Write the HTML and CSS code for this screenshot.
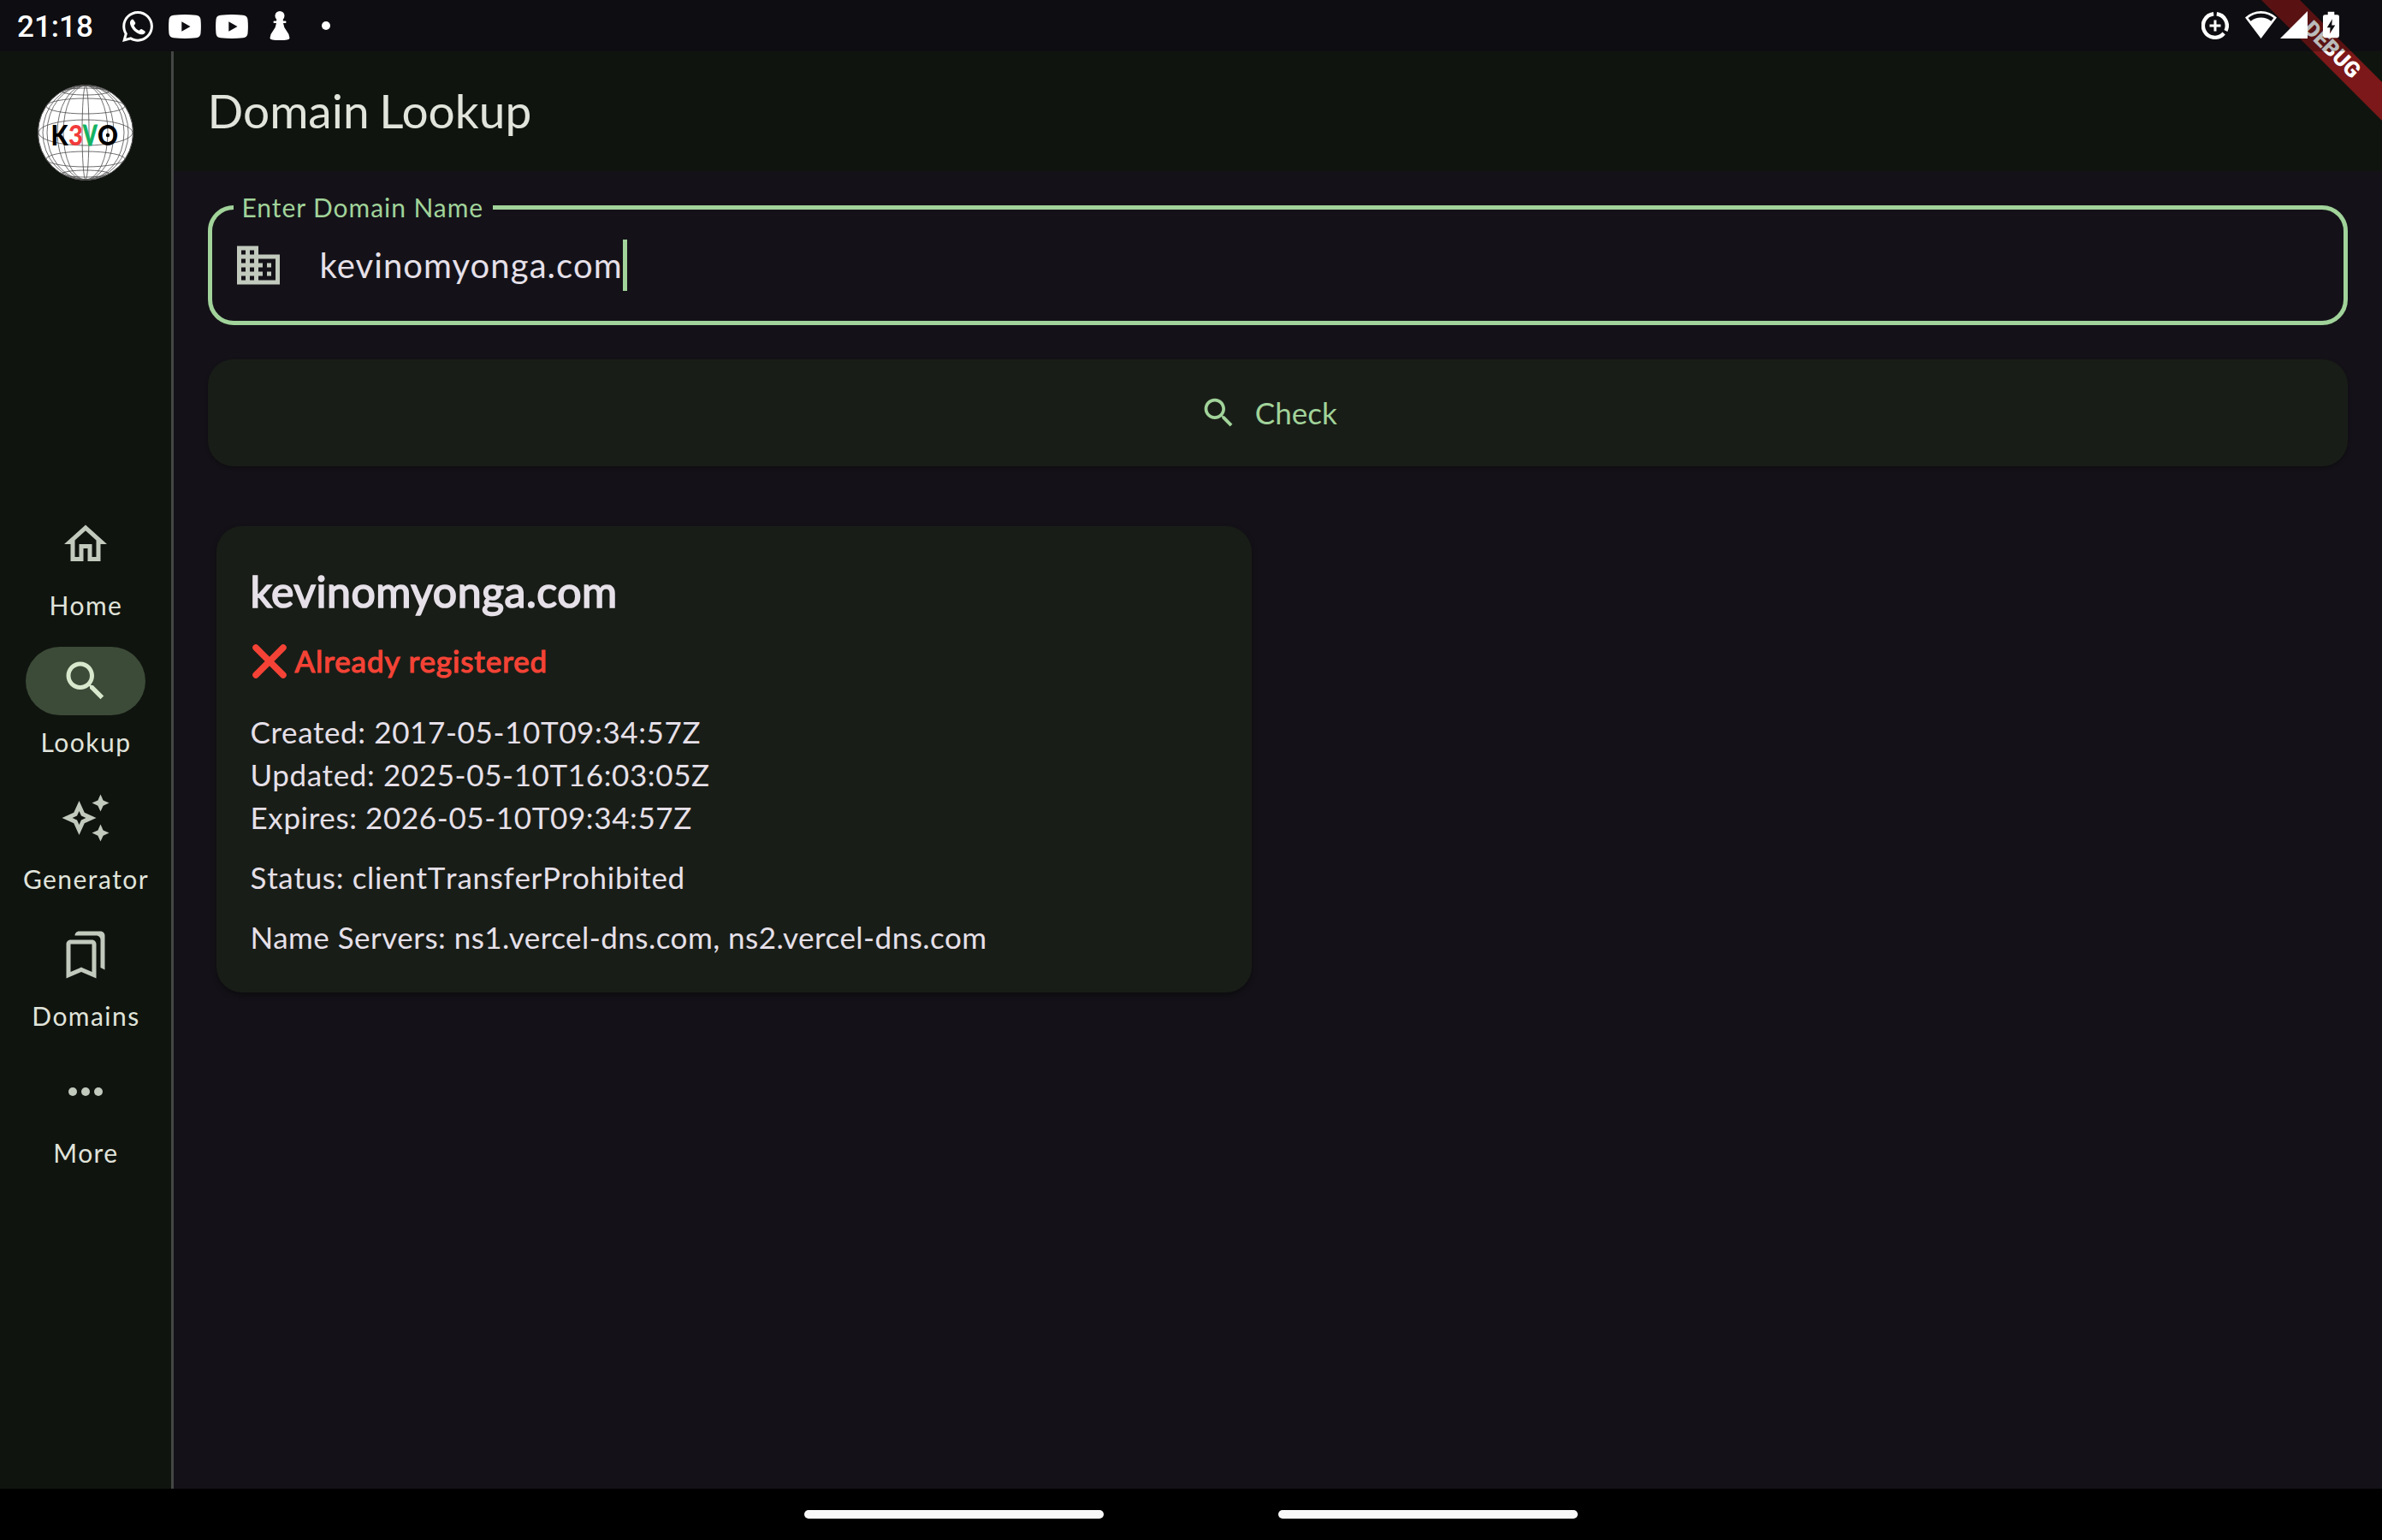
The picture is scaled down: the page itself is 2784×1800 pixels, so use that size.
FILE: index.html
```html
<!DOCTYPE html>
<html lang="en">
<head>
<meta charset="utf-8">
<title>Domain Lookup</title>
<link rel="stylesheet" href="styles.css">
</head>
<body>
<div class="screen">
  <header class="status-bar">
    <div class="status-left">
      <span class="clock">21:18</span>
      <svg class="whatsapp" viewBox="0 0 24 24"><path d="M.057 24l1.687-6.163c-1.041-1.804-1.588-3.849-1.587-5.946.003-6.556 5.338-11.891 11.893-11.891 3.181.001 6.167 1.24 8.413 3.488 2.245 2.248 3.481 5.236 3.48 8.414-.003 6.557-5.338 11.892-11.893 11.892-1.99-.001-3.951-.5-5.688-1.448l-6.305 1.654zm6.597-3.807c1.676.995 3.276 1.591 5.392 1.592 5.448 0 9.886-4.434 9.889-9.885.002-5.462-4.415-9.89-9.881-9.892-5.452 0-9.887 4.434-9.889 9.884-.001 2.225.651 3.891 1.746 5.634l-.999 3.648 3.742-.981z"/><path d="M7.1 6.7c.5-.5 1.2-.5 1.6.1l1.3 2.1c.3.5.2 1-.2 1.4l-.8.8c.9 1.9 2.2 3.2 4.1 4.1l.8-.8c.4-.4.9-.5 1.4-.2l2.1 1.3c.6.4.6 1.1.1 1.6-1 1.1-2.3 1.4-3.8.9-3.5-1.2-6.3-4-7.5-7.5-.5-1.5-.2-2.8.9-3.8z"/></svg>
      <svg class="youtube" viewBox="0 0 38 28"><path fill-rule="evenodd" d="M6 .7Q19-.5 32 .7q5 .5 5.5 5 .8 8.3 0 16.600-.5 4.500-5.500 5-13 1.200-26 0-5-.5-5.500-5-.8-8.300 0-16.600Q1 1.200 6 .7zM15.300 8.300v11.400L25.500 14z"/></svg>
      <svg class="youtube" viewBox="0 0 38 28"><path fill-rule="evenodd" d="M6 .7Q19-.5 32 .7q5 .5 5.500 5 .8 8.300 0 16.600-.5 4.500-5.500 5-13 1.200-26 0-5-.5-5.500-5-.8-8.300 0-16.600Q1 1.200 6 .7zM15.300 8.300v11.400L25.500 14z"/></svg>
      <svg class="pawn" viewBox="0 0 24 34"><circle cx="12" cy="5.500" r="5.500"/><path d="M8.500 9h7l.5 2.500h2.500q1 0 1 1.200t-1 1.200H16q.5 5 4.200 9.500 3.200 3.600 3.300 8 0 2.600-11.500 2.600T.5 31.400q.1-4.400 3.300-8Q7.500 19 8 13.900H5.500q-1 0-1-1.200t1-1.200H8z"/></svg>
      <span class="more-dot"></span>
    </div>
    <div class="status-right">
      <svg class="saver" viewBox="0 0 32 32"><g fill="none" stroke="#fff"><path stroke-width="4.400" d="M17.800 2.300A13.800 13.800 0 0 1 28.400 22M26.200 25A13.800 13.800 0 1 1 14.200 2.300"/><path stroke-width="3" d="M16 9.500v13M9.500 16h13"/></g></svg>
      <svg class="wifi" viewBox="0 0 37 32"><path fill-rule="evenodd" d="M18.500 0Q29 0 37 7.500L18.500 32 0 7.500Q8 0 18.500 0zM3.600 8l3 3.800Q12 7.600 18.500 7.600T30.400 11.800l3-3.800Q27 2.700 18.500 2.700T3.600 8z"/></svg>
      <svg class="signal" viewBox="0 0 32 32"><path d="M32 0v32H0z"/></svg>
      <svg class="battery" viewBox="0 0 20 32"><path fill-rule="evenodd" d="M6 0h8v3.500h3.500Q20 3.500 20 6v23.500q0 2.500-2.500 2.500h-15Q0 32 0 29.500V6q0-2.500 2.500-2.500H6zM11.500 9L5 19.500h4L8.300 27 15 16.500h-4.200z"/></svg>
    </div>
  </header>

  <svg class="debug-banner" viewBox="0 0 150 150">
    <path d="M9 0h45l96 96v45z"/>
    <text transform="translate(92 57.500) rotate(45)" text-anchor="middle" y="9">DEBUG</text>
  </svg>

  <div class="app">
    <nav class="rail">
      <svg class="logo" viewBox="0 0 112 112">
        <circle class="globe" cx="56" cy="56" r="55.500"/>
        <g class="grid">
          <ellipse cx="56" cy="56" rx="4" ry="55"/><ellipse cx="56" cy="56" rx="26" ry="55"/>
          <ellipse cx="56" cy="56" rx="33" ry="55"/><ellipse cx="56" cy="56" rx="45" ry="55"/>
          <ellipse cx="56" cy="56" rx="50" ry="55"/>
          <ellipse cx="56" cy="56" rx="55" ry="15"/><ellipse cx="56" cy="25" rx="46" ry="9"/>
          <ellipse cx="56" cy="87" rx="46" ry="9"/><ellipse cx="56" cy="8" rx="27" ry="4"/>
          <ellipse cx="56" cy="104" rx="27" ry="4"/>
        </g>
        <g class="wordmark">
          <text x="15.500" y="71" textLength="20" lengthAdjust="spacingAndGlyphs">K</text>
          <text class="red" x="36" y="71" textLength="17" lengthAdjust="spacingAndGlyphs">3</text>
          <text class="green" x="53" y="71" textLength="16.500" lengthAdjust="spacingAndGlyphs">V</text>
          <text x="70" y="71" textLength="24" lengthAdjust="spacingAndGlyphs">O</text>
        </g>
        <circle cx="82" cy="59" r="2.200"/>
      </svg>
      <div class="destinations">
        <a class="dest"><span class="pill"><svg viewBox="0 0 24 24"><path d="M12 5.690l5 4.500V18h-2v-6H9v6H7v-7.810l5-4.500M12 3L2 12h3v8h6v-6h2v6h6v-8h3L12 3z"/></svg></span><span class="dest-label">Home</span></a>
        <a class="dest active"><span class="pill"><svg viewBox="0 0 24 24"><path d="M15.500 14h-.79l-.28-.27C15.410 12.590 16 11.110 16 9.500 16 5.910 13.090 3 9.500 3S3 5.910 3 9.500 5.910 16 9.500 16c1.610 0 3.090-.59 4.230-1.570l.27.28v.79l5 4.990L20.490 19l-4.990-5zm-6 0C7.010 14 5 11.990 5 9.500S7.010 5 9.500 5 14 7.010 14 9.500 11.990 14 9.500 14z"/></svg></span><span class="dest-label">Lookup</span></a>
        <a class="dest"><span class="pill"><svg viewBox="0 0 24 24"><path d="M19 9l1.250-2.750L23 5l-2.750-1.250L19 1l-1.250 2.750L15 5l2.750 1.250L19 9zM19 15l-1.250 2.750L15 19l2.750 1.250L19 23l1.250-2.750L23 19l-2.750-1.250L19 15zM11.500 9.500L9 4 6.500 9.500 1 12l5.500 2.500L9 20l2.500-5.500L17 12l-5.500-2.500zm-1.510 3.490L9 15.170l-.99-2.180L5.830 12l2.180-.99L9 8.830l.99 2.180 2.180.99-2.180.99z"/></svg></span><span class="dest-label">Generator</span></a>
        <a class="dest"><span class="pill"><svg viewBox="0 0 24 24"><path d="M15 7v12.970l-4.210-1.810-.79-.34-.79.34L5 19.970V7h10m4-6H8.990C7.890 1 7 1.900 7 3h10c1.100 0 2 .9 2 2v13l2 1V3c0-1.100-.9-2-2-2zm-4 4H5c-1.100 0-2 .9-2 2v16l7-3 7 3V7c0-1.100-.9-2-2-2z"/></svg></span><span class="dest-label">Domains</span></a>
        <a class="dest"><span class="pill"><svg viewBox="0 0 24 24"><circle cx="6" cy="12" r="2"/><circle cx="12" cy="12" r="2"/><circle cx="18" cy="12" r="2"/></svg></span><span class="dest-label">More</span></a>
      </div>
    </nav>
    <div class="divider"></div>
    <main class="page">
      <div class="app-bar"><h1>Domain Lookup</h1></div>
      <div class="content">
        <div class="field">
          <span class="field-label">Enter Domain Name</span>
          <svg class="field-icon" viewBox="0 0 24 24"><path d="M12 7V3H2v18h20V7H12zM6 19H4v-2h2v2zm0-4H4v-2h2v2zm0-4H4V9h2v2zm0-4H4V5h2v2zm4 12H8v-2h2v2zm0-4H8v-2h2v2zm0-4H8V9h2v2zm0-4H8V5h2v2zm10 12h-8v-2h2v-2h-2v-2h2v-2h-2V9h8v10zm-2-8h-2v2h2v-2zm0 4h-2v2h2v-2z"/></svg>
          <span class="field-value">kevinomyonga.com</span><span class="caret"></span>
        </div>
        <div class="check-button">
          <svg viewBox="0 0 24 24"><path d="M15.500 14h-.79l-.28-.27C15.410 12.590 16 11.110 16 9.500 16 5.910 13.090 3 9.500 3S3 5.910 3 9.500 5.910 16 9.500 16c1.610 0 3.090-.59 4.230-1.570l.27.28v.79l5 4.990L20.490 19l-4.990-5zm-6 0C7.010 14 5 11.990 5 9.500S7.010 5 9.500 5 14 7.010 14 9.500 11.990 14 9.500 14z"/></svg>
          <span>Check</span>
        </div>
        <section class="card">
          <h2>kevinomyonga.com</h2>
          <div class="availability">
            <svg viewBox="0 0 40 40"><path d="M4 4l32 32M36 4L4 36"/></svg>
            <span>Already registered</span>
          </div>
          <div class="dates">
            <p>Created: 2017-05-10T09:34:57Z</p>
            <p>Updated: 2025-05-10T16:03:05Z</p>
            <p>Expires: 2026-05-10T09:34:57Z</p>
          </div>
          <p class="domain-status">Status: clientTransferProhibited</p>
          <p class="servers">Name Servers: ns1.vercel-dns.com, ns2.vercel-dns.com</p>
        </section>
      </div>
    </main>
  </div>

  <footer class="gesture-bar"><span></span><span></span></footer>
</div>
</body>
</html>
```
FILE: styles.css
```css
* { box-sizing: border-box; }

body {
  margin: 0;
  background: #141218;
  font-family: Lato, sans-serif;
}

h1, h2, p { margin: 0; font-weight: 400; }
svg { display: block; flex: none; }

.screen {
  position: relative;
  display: grid;
  grid-template-rows: 60px 1fr 60px;
  width: 2784px;
  height: 1800px;
  overflow: hidden;
}

/* System status bar: a translucent scrim over the window */
.status-bar {
  position: relative;
  z-index: 2;
  display: flex;
  justify-content: space-between;
  background: rgba(0, 0, 0, .27);
  fill: #fff;
}
.status-left, .status-right { display: flex; align-items: flex-start; }
.status-left { padding-left: 20px; }
.clock {
  width: 123px;
  padding-top: 11px;
  color: #fff;
  font: 500 35px/41px Roboto, sans-serif;
}
.whatsapp { width: 36px; height: 36px; margin: 12.5px 18px 0 0; }
.youtube { width: 38px; height: 28px; margin: 16.5px 17px 0 0; }
.pawn { width: 24px; height: 34px; margin: 13px 0 0 8px; }
.more-dot {
  width: 10px;
  height: 10px;
  margin: 25px 0 0 37px;
  border-radius: 50%;
  background: #fff;
}
.status-right { padding: 13px 50px 0 0; }
.saver { width: 32px; height: 32px; margin-right: 19px; margin-top: .5px; }
.wifi { width: 37px; height: 32px; margin-right: 4px; }
.signal { width: 32px; height: 32px; margin-right: 18px; }
.battery { width: 19px; height: 32px; }

.debug-banner {
  position: absolute;
  z-index: 1;
  top: 0;
  right: 0;
  width: 150px;
  height: 150px;
}
.debug-banner path { fill: #7c1819; }
.debug-banner text { fill: #fff; font: 900 25.5px Roboto, sans-serif; }

.app { display: grid; grid-template-columns: 200px 3px 1fr; }

.rail {
  display: flex;
  flex-direction: column;
  align-items: center;
  padding-top: 39px;
  background: #10140f;
}
.logo { width: 112px; height: 112px; }
.globe { fill: #fff; stroke: #555; }
.grid { fill: none; stroke: #4a4a4a; stroke-width: .8; }
.wordmark { font: 900 33px Lato, sans-serif; }
.wordmark .red { fill: #f23b3b; }
.wordmark .green { fill: #12b262; stroke: #12b262; stroke-width: .8; }

.destinations { display: flex; flex-direction: column; gap: 29px; margin-top: 385px; }
.dest { display: flex; flex-direction: column; align-items: center; gap: 11px; fill: #c2c9bd; }
.pill {
  display: flex;
  align-items: center;
  justify-content: center;
  width: 140px;
  height: 80px;
  border-radius: 40px;
}
.pill svg { width: 60px; height: 60px; }
.active { fill: #d7e8cd; }
.active .pill { background: #3c4b38; }
.dest-label {
  padding-left: 1px;
  color: #e0e4db;
  font-size: 30px;
  line-height: 40px;
  letter-spacing: 1.45px;
}

.divider { background: #444645; }

.app-bar { height: 140px; padding: 36px 0 0 39.5px; background: #10140f; }
.app-bar h1 { color: #e0e4db; font-size: 55px; line-height: 66px; word-spacing: -2.5px; }

.content { display: flex; flex-direction: column; padding: 40px 40px 0 39.5px; }

.field {
  position: relative;
  display: flex;
  height: 140px;
  padding: 35px 24.5px;
  border: 5px solid #a1d39a;
  border-radius: 30px;
}
.field-label {
  position: absolute;
  top: -21px;
  left: 25px;
  width: 303px;
  padding-left: 10px;
  background: #141218;
  color: #a1d39a;
  font-size: 30px;
  line-height: 36px;
  letter-spacing: .94px;
}
.field-icon { width: 60px; height: 60px; margin-right: 41.5px; fill: #c2c9bd; }
.field-value { color: #e6e0e9; font-size: 40px; line-height: 60px; letter-spacing: 1.07px; }
.caret { width: 5px; height: 60px; margin-left: .5px; background: #a1d39a; }

.check-button {
  display: flex;
  align-items: center;
  justify-content: center;
  gap: 20px;
  height: 125px;
  margin-top: 40px;
  padding-right: 22px;
  border-radius: 30px;
  background: #191d17;
  box-shadow: 0 2px 4px rgba(0, 0, 0, .3);
  color: #a1d39a;
  fill: #a1d39a;
  font-size: 35px;
}
.check-button svg { width: 45px; height: 45px; }
.check-button span { padding-bottom: 2px; }

.card {
  width: 1210px;
  height: 545px;
  margin: 70px 0 0 10px;
  padding: 40px;
  border-radius: 30px;
  background: #191d17;
  box-shadow: 0 3px 6px rgba(0, 0, 0, .4);
  color: #e6e0e9;
  font-size: 35px;
  line-height: 50px;
  letter-spacing: .62px;
}
.card h2 {
  font-size: 50px;
  line-height: 72px;
  letter-spacing: .49px;
  -webkit-text-stroke: 1.7px #e6e0e9;
}
.availability {
  display: flex;
  gap: 10px;
  margin: 20px 0 33px;
  color: #f44336;
  letter-spacing: .93px;
  -webkit-text-stroke: 1.2px #f44336;
}
.availability svg { width: 40px; height: 40px; margin: 5.5px 0 0 2px; }
.availability path { fill: none; stroke: #f44336; stroke-width: 7.5; stroke-linecap: round; }
.domain-status, .servers { margin-top: 20px; }
.domain-status { font-kerning: none; letter-spacing: .67px; }
.servers { letter-spacing: .48px; }

.gesture-bar {
  display: flex;
  justify-content: center;
  gap: 204px;
  padding-top: 25px;
  background: #000;
}
.gesture-bar span { width: 350px; height: 10px; border-radius: 5px; background: #f8f8f8; }
```
